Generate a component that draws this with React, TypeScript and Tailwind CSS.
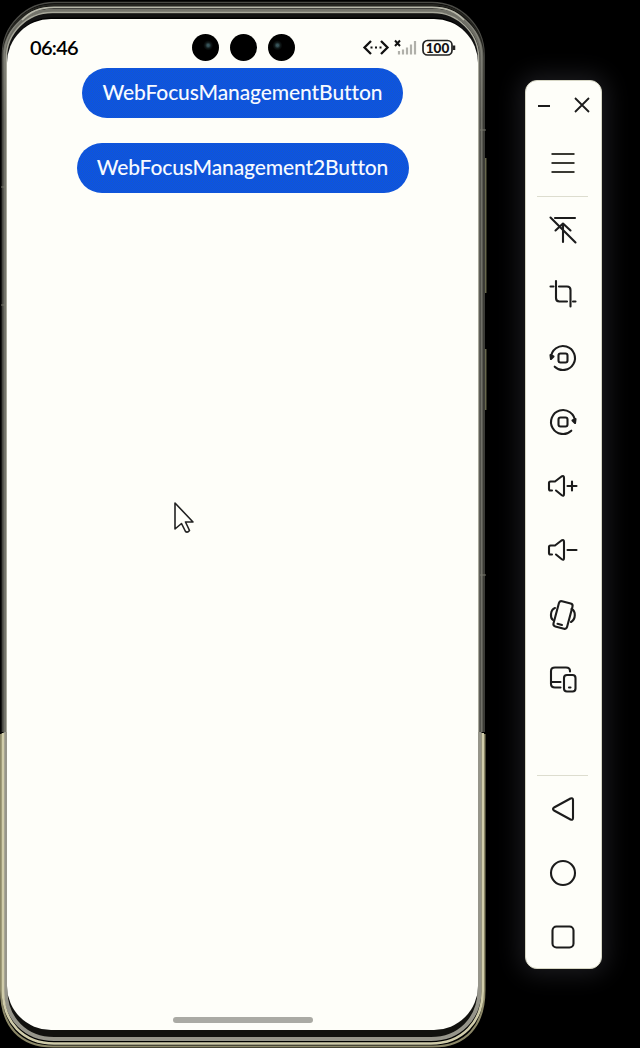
import type { ReactNode } from "react";

function Icon({ children }: { children: ReactNode }) {
  return (
    <svg
      className="block h-8 w-8"
      viewBox="0 0 32 32"
      fill="none"
      stroke="#1c1c1c"
      strokeWidth="2.1"
      strokeLinecap="round"
      strokeLinejoin="round"
    >
      {children}
    </svg>
  );
}

function PhoneFrame() {
  return (
    <svg className="absolute inset-0 h-[1048px] w-[490px]" viewBox="0 0 490 1048" fill="none">
      <defs>
        <clipPath id="upper"><rect width="490" height="732" /></clipPath>
        <clipPath id="lower"><rect y="732" width="490" height="316" /></clipPath>
        <linearGradient id="edge" x1="0" y1="0" x2="0" y2="120" gradientUnits="userSpaceOnUse">
          <stop offset="0" stopColor="#77776e" />
          <stop offset="1" stopColor="#505049" />
        </linearGradient>
      </defs>
      <g clipPath="url(#upper)">
        <rect x="7" y="15.5" width="471" height="1018" rx="44" stroke="#111" strokeWidth="4" />
        <rect x="2.5" y="2.5" width="481.5" height="1042" rx="52" stroke="#4b4b46" strokeWidth="1.6" />
        <rect x="3.6" y="5" width="479.3" height="1036" rx="50" stroke="#24241f" strokeWidth="2" />
        <rect x="4.5" y="10.8" width="477" height="1024" rx="47" stroke="url(#edge)" strokeWidth="4" />
        <rect x="4.4" y="7.3" width="477.2" height="1032" rx="49" stroke="#b0b0a4" strokeOpacity="0.35" strokeWidth="1.4" />
        <path d="M22 20C30 11 40 7.3 54 7.3H432C446 7.3 456 11 464 20" stroke="#b8b8aa" strokeWidth="1.7" />
        <rect x="6.3" y="12.5" width="472.4" height="1024" rx="46" stroke="#a9a99c" strokeWidth="1.4" />
        <path d="M485.7 158V293M485.7 349V410" stroke="#68684c" strokeWidth="1.5" />
        <path d="M1 187H6M1 305H6M480 130H486M480 575H486" stroke="#77776b" strokeWidth="1" />
      </g>
      <g clipPath="url(#lower)">
        <path d="M9 1000C14 1025 33 1034 54 1034H431C452 1034 470 1025 476 1000" stroke="#11110e" strokeWidth="8" />
        <path d="M5.5 732V990C5.5 1019 26 1039 54 1039H431C459 1039 479.5 1019 479.5 990V732" stroke="#96958a" strokeWidth="4" />
        <path d="M1 734V990C1 1026 20 1046.5 53 1046.5H433C466 1046.5 484.5 1026 484.5 990V734" stroke="#8c8868" strokeWidth="2" />
        <path d="M3 733V991C3 1022 23 1043.5 54 1043.5H431C462 1043.5 482.7 1022 482.7 991V733" stroke="#d0ccaa" strokeWidth="2.6" />
      </g>
    </svg>
  );
}

function StatusBar() {
  return (
    <div className="flex h-[49px] items-center pt-2 pl-[23px] text-black">
      <span className="w-[161.5px] pb-[2px] text-[20px] leading-none font-semibold tracking-[-0.7px]">06:46</span>
      <div className="flex gap-[11px]">
        <span className="size-[27px] rounded-full bg-black bg-[radial-gradient(circle_at_60%_42%,#38545a_0_1px,#101818_3px,#000_5px)]" />
        <span className="size-[27px] rounded-full bg-black" />
        <span className="size-[27px] rounded-full bg-black bg-[radial-gradient(circle_at_35%_42%,#38545a_0_1px,#101818_3px,#000_5px)]" />
      </div>
      <svg className="ml-[67.5px] h-5 w-[94px]" viewBox="0 0 94 20" fill="none">
        <path d="M9 3L2.5 9.5L9 16M19 3L25.5 9.5L19 16" stroke="#111" strokeWidth="2.3" />
        <path d="M8.5 9.5H10.5M13 9.5H15M17.5 9.5H19.5" stroke="#111" strokeWidth="2" />
        <path d="M33 2.5L38 8M38 2.5L33 8" stroke="#111" strokeWidth="2" />
        <path d="M37 13V16.5M41 11.5V16.5M45 9.5V16.5M49 6.5V16.5M53 3V16.5" stroke="#b0b0aa" strokeWidth="2.2" />
        <rect x="61" y="2.5" width="29" height="14.5" rx="4.5" stroke="#222" strokeWidth="1.7" />
        <path d="M92 7.5V12" stroke="#222" strokeWidth="2.5" />
        <text x="75.5" y="14.7" fill="#111" fontFamily="Lato, sans-serif" fontSize="13.5" fontWeight="900" textAnchor="middle">100</text>
      </svg>
    </div>
  );
}

const tools = [
  <Icon key="pin"><path d="M8 4H28M3.5 3.5L28.5 28.5M16 28V9.5M8.5 16.5L16 9.5L23.5 16.5" /></Icon>,
  <Icon key="crop"><path d="M3.5 8.5H6.5M9 3V20Q9 23.5 12.5 23.5H20M12 8.5H20Q23.5 8.5 23.5 12V28.5M26 23.5H28.5" /></Icon>,
  <Icon key="left"><path d="M4 15.5A12 12 0 1 1 7.7 24.7" /><path d="M3.5 13L4 17L6.5 14.5Z" fill="#1c1c1c" /><rect x="11.5" y="11.5" width="9" height="9" rx="2" /></Icon>,
  <Icon key="right"><path d="M28 15.5A12 12 0 1 0 24.3 24.7" /><path d="M28.5 13L28 17L25.5 14.5Z" fill="#1c1c1c" /><rect x="11.5" y="11.5" width="9" height="9" rx="2" /></Icon>,
  <Icon key="up"><path d="M5 20.5H3.5Q2 20.5 2 19V13Q2 11.5 3.5 11.5H8L14.5 6.5Q17 5 17 8V24Q17 27 14.5 25L9 20.5M20.5 16H29.5M25 11.5V20.5" /></Icon>,
  <Icon key="down"><path d="M5 20.5H3.5Q2 20.5 2 19V13Q2 11.5 3.5 11.5H8L14.5 6.5Q17 5 17 8V24Q17 27 14.5 25L9 20.5M20.5 16H29.5" /></Icon>,
  <Icon key="shake">
    <rect x="9" y="3" width="14" height="26" rx="2.5" transform="rotate(15 16 16)" />
    <path d="M10.5 24.7L15 26M8 9C3 11 3 19 6 21M24.5 10C29 12 29 20 24 23" />
  </Icon>,
  <Icon key="devices"><path d="M13.5 24.5H8Q4 24.5 4 21V8Q4 4.5 8 4.5H19Q23 4.5 23 8V8.5M4 19H13.5" /><rect x="17" y="12" width="11.5" height="16.5" rx="3" /><path d="M22 24.5H23.5" /></Icon>,
];

function Toolbar() {
  return (
    <aside className="mt-20 ml-[39px] flex h-[889px] w-[77px] flex-col items-center rounded-xl border border-[#d6d6c4] bg-[#fefef9] pr-[1.5px] shadow-[0_0_24px_5px_#1c1c20]">
      <div className="flex h-[48px] w-full items-center justify-between pr-[10px] pl-[12px]">
        <span className="mt-px h-[2px] w-3 bg-[#1c1c1c]" />
        <svg className="size-4" viewBox="0 0 16 16" stroke="#1c1c1c" strokeWidth="1.8"><path d="M1 1L15 15M15 1L1 15" /></svg>
      </div>
      <div className="flex h-[68px] w-[51px] items-center justify-center border-b border-[#ddddcf] pt-px">
        <svg className="h-6 w-6" viewBox="0 0 24 24" stroke="#3a3a34" strokeWidth="2"><path d="M0.5 3H23.5M0.5 12H23.5M0.5 21H23.5" /></svg>
      </div>
      <div className="flex flex-col gap-[32.2px] pt-[16.5px]">{tools}</div>
      <div className="mt-auto flex h-[193px] w-[51px] flex-col items-center gap-8 border-t border-[#ddddcf] pt-[16.5px]">
        <Icon><path d="M23.5 5.5Q26 4.5 26 7V25Q26 27.5 23.5 26.5L7 17.5Q5 16 7 14.5Z" /></Icon>
        <Icon><circle cx="16" cy="16" r="12" /></Icon>
        <Icon><rect x="5.5" y="5.5" width="21" height="21" rx="4" /></Icon>
      </div>
    </aside>
  );
}

const buttonClass =
  "flex h-[50px] items-center justify-center rounded-full bg-[#1257d8] bg-[repeating-conic-gradient(#0650ed_0_25%,#1859c8_0_50%)] bg-[length:2px_2px] pb-[2px] text-[21px] font-medium text-[#f7faff]";

export default function App() {
  return (
    <main className="flex h-[1048px] w-[640px] overflow-hidden bg-black font-['Lato',sans-serif]">
      <section className="relative h-[1048px] w-[486px] shrink-0 pt-[19px] pl-[7px]">
        <PhoneFrame />
        <div className="relative flex h-[1011px] w-[471px] flex-col rounded-[44px] bg-[#fefef9]">
          <StatusBar />
          <div className="flex flex-col items-center gap-[25px]">
            <button className={`${buttonClass} w-[321px] tracking-[-0.1px]`}>WebFocusManagementButton</button>
            <button className={`${buttonClass} w-[332px] tracking-[-0.12px]`}>WebFocusManagement2Button</button>
          </div>
          <div className="mt-auto mb-[7px] ml-[165.5px] h-[6px] w-[140px] rounded-full bg-[#aaaaa4]" />
          <svg className="absolute top-[482px] left-[166px] h-9 w-6" viewBox="0 0 24 36" fill="#fffffa" stroke="#222" strokeWidth="1.6" strokeLinejoin="round">
            <path d="M2 2V28L8.5 22.5L12.5 30.5Q14.5 32 16.5 29.5L12.5 21H20Z" />
          </svg>
        </div>
      </section>
      <Toolbar />
    </main>
  );
}
